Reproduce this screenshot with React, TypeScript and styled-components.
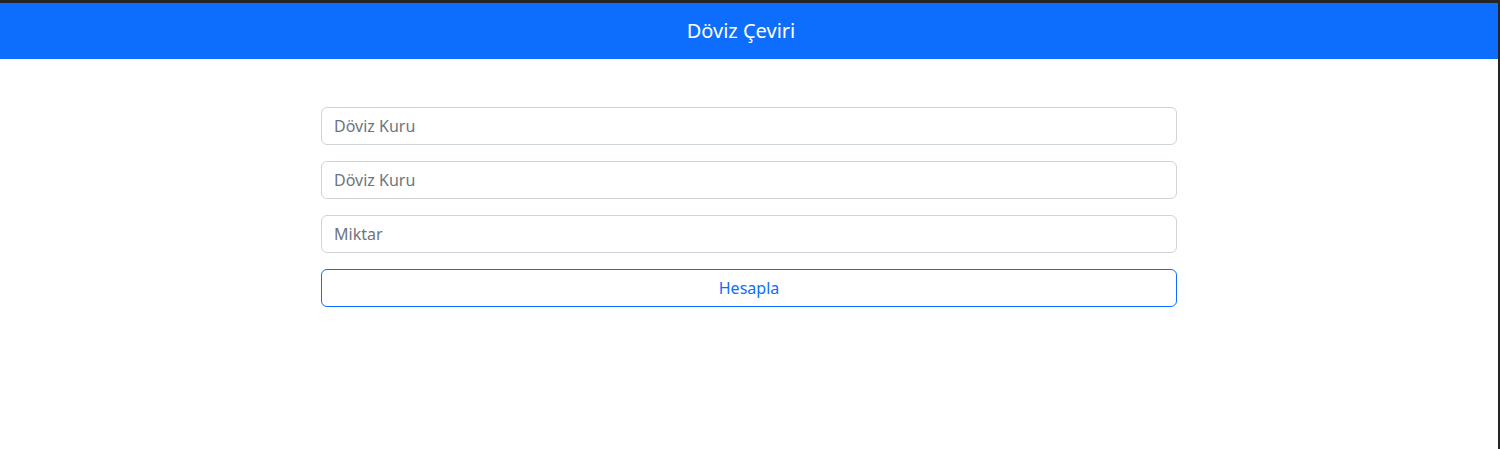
import React from "react";
import styled, { createGlobalStyle } from "styled-components";

const GlobalStyle = createGlobalStyle`
  html, body {
    margin: 0;
    padding: 0;
    background: #ffffff;
  }
  body {
    font-family: "Noto Sans", "Open Sans", "Liberation Sans", sans-serif;
    font-size: 16px;
    color: #212529;
  }
  * {
    box-sizing: border-box;
  }
`;

const Frame = styled.div`
  height: 449px;
  border-top: 3px solid #252526;
  border-right: 2px solid #252526;
  background: #ffffff;
  overflow: hidden;
`;

const Navbar = styled.nav`
  background-color: #0d6efd;
  padding: 8px 0;
  display: flex;
  justify-content: center;
`;

const Brand = styled.span`
  color: #ffffff;
  font-size: 20px;
  line-height: 30px;
  padding: 5px 0;
  margin-right: 16px;
`;

const Form = styled.form`
  width: 856px;
  margin: 48px auto 0;
  display: flex;
  flex-direction: column;
  gap: 16px;
`;

const Input = styled.input`
  display: block;
  width: 100%;
  height: 38px;
  padding: 6px 12px;
  font-family: inherit;
  font-size: 16px;
  color: #212529;
  background: #ffffff;
  border: 1px solid #ced4da;
  border-radius: 6px;
  outline: none;

  &::placeholder {
    color: #6c757d;
  }
`;

const OutlineButton = styled.button`
  width: 100%;
  height: 38px;
  font-family: inherit;
  font-size: 16px;
  color: #0d6efd;
  background: transparent;
  border: 1px solid #0d6efd;
  border-radius: 6px;
  cursor: pointer;
`;

const App = () => {
  return (
    <>
      <GlobalStyle />
      <Frame>
        <Navbar>
          <Brand>Döviz Çeviri</Brand>
        </Navbar>
        <Form onSubmit={(e) => e.preventDefault()}>
          <Input type="text" placeholder="Döviz Kuru" />
          <Input type="text" placeholder="Döviz Kuru" />
          <Input type="number" placeholder="Miktar" />
          <OutlineButton type="submit">Hesapla</OutlineButton>
        </Form>
      </Frame>
    </>
  );
};

export default App;
